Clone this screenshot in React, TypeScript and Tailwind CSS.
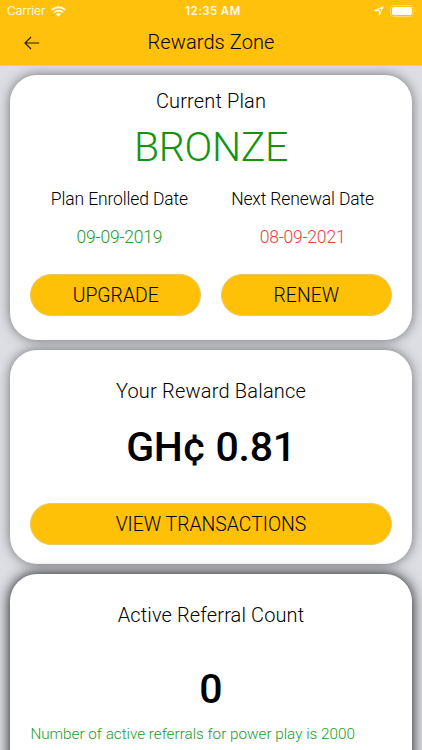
import type { ReactNode } from "react";

function StatusBar() {
  return (
    <div className="flex h-[22px] items-center justify-between pl-[7px] pr-[5px] text-[#fffae6]">
      <div className="flex w-[120px] items-center gap-[6px]">
        <span className="font-[Inter] text-[12px] leading-[22px] [-webkit-text-stroke:0.2px_#fffae6]">Carrier</span>
        <svg width="15" height="11" viewBox="0 0 15 11" fill="none">
          <path d="M1 3.9a9.3 9.3 0 0 1 13 0" stroke="currentColor" strokeWidth="2.1" />
          <path d="M3.2 6.4a6.1 6.1 0 0 1 8.6 0" stroke="currentColor" strokeWidth="2" />
          <path d="M7.5 10.7 5.1 8.3a3.4 3.4 0 0 1 4.8 0Z" fill="currentColor" />
        </svg>
      </div>
      <span className="pl-[2px] font-[Inter] text-[11.5px] font-semibold leading-[22px] tracking-[0.4px]">12:35 AM</span>
      <div className="flex w-[120px] items-center justify-end gap-[6px]">
        <svg width="10" height="10" viewBox="0 0 10 10" fill="none">
          <path d="M.9 4.6 9 .9 5.4 9.1V4.6Z" stroke="currentColor" strokeWidth="1.1" strokeLinejoin="round" />
        </svg>
        <svg width="27" height="12" viewBox="0 0 27 12" fill="none">
          <rect x=".5" y=".5" width="23" height="11" rx="3" stroke="#ffdb70" />
          <rect x="2" y="2" width="20" height="8" rx="1.7" fill="#fff" />
          <path d="M25 4v4c1.5-.6 1.5-3.4 0-4Z" fill="#ffdb70" />
        </svg>
      </div>
    </div>
  );
}

function Pill({ children }: { children: ReactNode }) {
  return (
    <button className="flex h-[42px] w-full items-center justify-center rounded-full border border-[#eac86a] bg-[#ffc108] pt-[2px] text-[19.4px] font-light text-black">
      {children}
    </button>
  );
}

function PlanDate({ label, date, tone }: { label: string; date: string; tone: string }) {
  return (
    <div className="text-[17.5px] leading-[26px] tracking-[-0.13px]">
      <p className="whitespace-nowrap">{label}</p>
      <p className={`mt-[12px] tracking-[-0.2px] ${tone}`}>{date}</p>
    </div>
  );
}

export default function App() {
  return (
    <div className="flex h-[750px] w-[422px] flex-col overflow-hidden bg-[#dddee3] font-[Roboto,sans-serif] font-light text-black">
      <header className="relative z-10 h-[66px] shrink-0 border-b border-[#f6cd5c] bg-[#ffc10b]">
        <StatusBar />
        <div className="grid h-[40px] grid-cols-[1fr_auto_1fr] items-center">
          <svg className="ml-[24px] mt-px" width="16" height="14" viewBox="0 0 16 14" fill="none">
            <path d="M15.2 7H1M7 1 1 7l6 6" stroke="#211a05" strokeWidth="1.2" />
          </svg>
          <h1 className="text-[20px] leading-[40px] tracking-[0.1px]">Rewards Zone</h1>
        </div>
      </header>

      <main className="flex flex-col gap-[10px] px-[10.4px] pt-[9px]">
        <section className="flex h-[265px] shrink-0 flex-col rounded-[27px] bg-white px-5 shadow-[0_0_12px_rgba(0,0,0,0.5)]">
          <h2 className="mt-[11px] text-center text-[20px] leading-[30px] tracking-[0.15px]">Current Plan</h2>
          <p className="mt-[7px] text-center text-[41px] leading-[48px] tracking-[-0.35px] text-[#13940f]">BRONZE</p>
          <div className="-mx-[2.5px] mt-[15px] grid grid-cols-2 text-center">
            <PlanDate label="Plan Enrolled Date" date="09-09-2019" tone="text-[#249b2a]" />
            <PlanDate label="Next Renewal Date" date="08-09-2021" tone="text-[#e34242]" />
          </div>
          <div className="mt-[24px] grid grid-cols-2 gap-5">
            <Pill>UPGRADE</Pill>
            <Pill>RENEW</Pill>
          </div>
        </section>

        <section className="flex h-[214px] shrink-0 flex-col rounded-[27px] bg-white px-5 shadow-[0_0_12px_rgba(0,0,0,0.5)]">
          <h2 className="mt-[26px] text-center text-[20px] leading-[30px] tracking-[0.2px]">Your Reward Balance</h2>
          <p className="mt-[16px] text-center text-[41px] font-medium leading-[50px] tracking-[-0.25px]">GH¢ 0.81</p>
          <div className="mt-[31px]">
            <Pill>VIEW TRANSACTIONS</Pill>
          </div>
        </section>

        <section className="flex h-[240px] shrink-0 flex-col rounded-[27px] bg-white px-5 shadow-[0_0_14px_rgba(0,0,0,0.95)]">
          <h2 className="mt-[26px] text-center text-[20px] leading-[30px] tracking-[0.12px]">Active Referral Count</h2>
          <p className="mt-[34px] text-center text-[41px] font-medium leading-[50px]">0</p>
          <p className="mt-[7px] whitespace-nowrap text-[15.25px] leading-[26px] text-[#249b2a]">
            Number of active referrals for power play is 2000
          </p>
        </section>
      </main>
    </div>
  );
}
